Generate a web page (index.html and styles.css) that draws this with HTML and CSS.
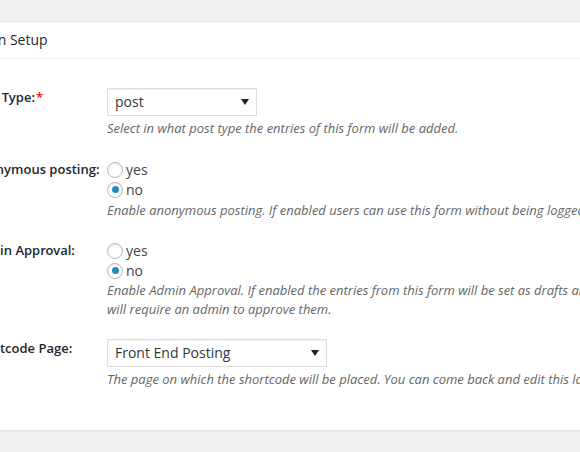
FILE: index.html
```html
<!DOCTYPE html>
<html>
<head>
<meta charset="utf-8">
<link rel="stylesheet" href="styles.css">
</head>
<body>
<div class="wrap">
  <div class="postbox">
    <h2 class="hndle">Plugin Setup</h2>
    <div class="inside">
      <div class="row">
        <div class="label">Post Type:<span class="req">*</span></div>
        <div class="field">
          <div class="select sel-short">
            <span>post</span>
            <svg class="arrow" width="8" height="6" viewBox="0 0 8 6"><polygon points="0,0 8,0 4,6" fill="#222"/></svg>
          </div>
          <p class="description">Select in what post type the entries of this form will be added.</p>
        </div>
      </div>
      <div class="row row-anon">
        <div class="label">Anonymous posting:</div>
        <div class="field">
          <label class="radio"><span class="dot"></span>yes</label>
          <label class="radio"><span class="dot checked"></span>no</label>
          <p class="description">Enable anonymous posting. If enabled users can use this form without being logged in.</p>
        </div>
      </div>
      <div class="row">
        <div class="label">Admin Approval:</div>
        <div class="field">
          <label class="radio"><span class="dot"></span>yes</label>
          <label class="radio"><span class="dot checked"></span>no</label>
          <p class="description tight">Enable Admin Approval. If enabled the entries from this form will be set as drafts and<br>will require an admin to approve them.</p>
        </div>
      </div>
      <div class="row row-page">
        <div class="label">Shortcode Page:</div>
        <div class="field">
          <div class="select sel-long">
            <span>Front End Posting</span>
            <svg class="arrow" width="8" height="6" viewBox="0 0 8 6"><polygon points="0,0 8,0 4,6" fill="#222"/></svg>
          </div>
          <p class="description">The page on which the shortcode will be placed. You can come back and edit this later.</p>
        </div>
      </div>
    </div>
  </div>
</div>
</body>
</html>
```
FILE: styles.css
```css
html, body {
  margin: 0;
  padding: 0;
}
body {
  background: #f1f1f1;
  font-family: "Open Sans", "Noto Sans", sans-serif;
  color: #444;
  overflow: hidden;
  width: 580px;
  height: 452px;
}
.wrap {
  padding-top: 21px;
}
.postbox {
  margin-left: -42px;
  width: 820px;
  background: #fff;
  border: 1px solid #e5e5e5;
  box-shadow: 0 1px 1px rgba(0, 0, 0, 0.04);
}
.hndle {
  margin: 0;
  font-size: 14px;
  font-weight: 400;
  line-height: 1.4;
  padding: 8px 12px 8px 7px;
  color: #23282d;
  border-bottom: 1px solid #eee;
}
.inside {
  padding: 29px 12px 41px;
  display: flex;
  flex-direction: column;
  gap: 21px;
}
.row {
  display: flex;
  align-items: flex-start;
}
.row-anon {
  margin-top: 1px;
}
.row-page {
  margin-top: -1px;
}
.label {
  width: 136px;
  flex: none;
  font-family: "Open Sans Semibold", "Open Sans", sans-serif;
  font-size: 13px;
  font-weight: 600;
  line-height: 18px;
  color: #23282d;
  white-space: nowrap;
}
.req {
  color: #f00;
  margin-left: 1px;
}
.field {
  display: flex;
  flex-direction: column;
  align-items: flex-start;
}
.select {
  box-sizing: border-box;
  height: 28px;
  margin-bottom: 2px;
  border: 1px solid #ddd;
  box-shadow: inset 0 1px 2px rgba(0, 0, 0, 0.07);
  display: flex;
  align-items: center;
  justify-content: space-between;
  padding: 0 7px 0 7px;
  font-size: 14px;
  color: #32373c;
}
.sel-short { width: 150px; }
.sel-long { width: 220px; }
.arrow {
  display: block;
}
.description {
  margin: 1px 0 0;
  font-size: 13px;
  font-style: italic;
  line-height: 19px;
  color: #666;
  white-space: nowrap;
}
.description.tight {
  margin-top: 0;
}
.radio {
  display: flex;
  align-items: center;
  height: 20px;
  font-size: 14px;
  color: #444;
}
.dot {
  box-sizing: border-box;
  width: 16px;
  height: 16px;
  border: 1px solid #b4b9be;
  border-radius: 50%;
  background: #fff;
  box-shadow: inset 0 1px 2px rgba(0, 0, 0, 0.1);
  margin-right: 3px;
  display: flex;
  align-items: center;
  justify-content: center;
}
.dot.checked::before {
  content: "";
  width: 7px;
  height: 7px;
  border-radius: 50%;
  background: #1e8cbe;
}
```
